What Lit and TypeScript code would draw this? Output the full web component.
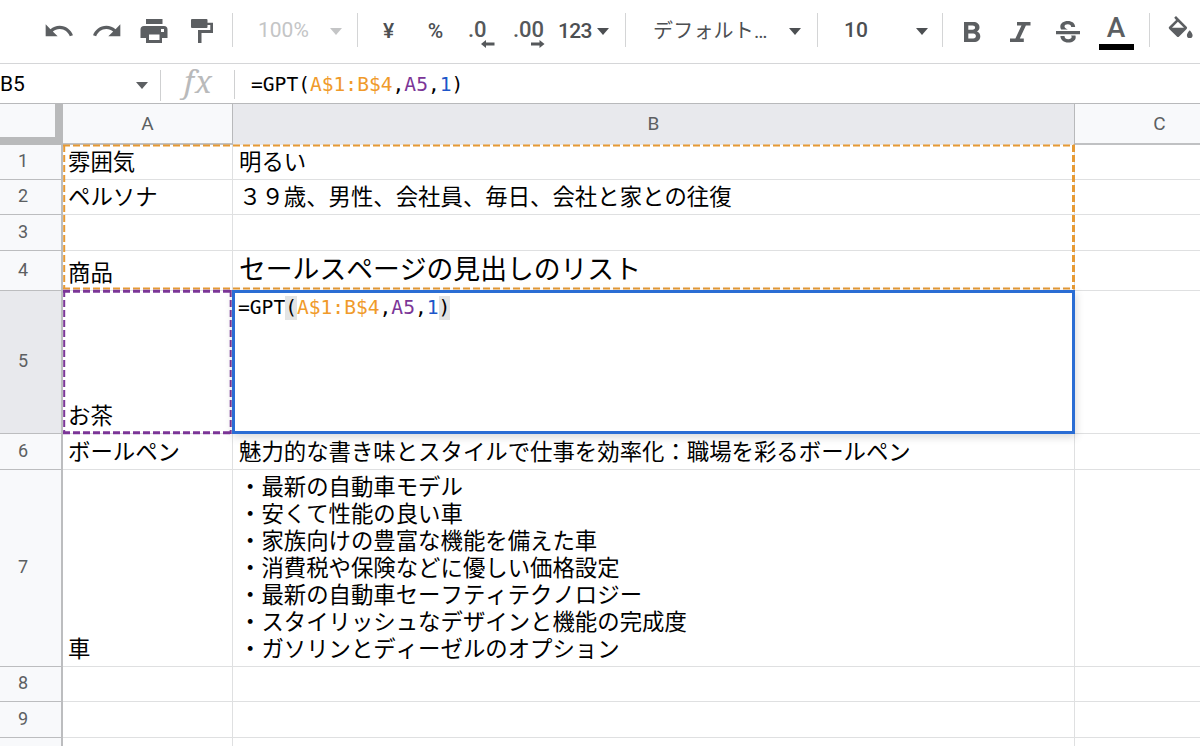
import { LitElement, html, css, svg, nothing } from "lit";
import { customElement } from "lit/decorators.js";
import { classMap } from "lit/directives/class-map.js";

interface Row {
  n?: number;
  h: number;
  a?: string;
  b?: string;
  large?: boolean;
  editing?: boolean;
}

const ROWS: Row[] = [
  { n: 1, h: 35, a: "雰囲気", b: "明るい" },
  { n: 2, h: 35, a: "ペルソナ", b: "３９歳、男性、会社員、毎日、会社と家との往復" },
  { n: 3, h: 36 },
  { n: 4, h: 40, a: "商品", b: "セールスページの見出しのリスト", large: true },
  { n: 5, h: 143, a: "お茶", editing: true },
  { n: 6, h: 36, a: "ボールペン", b: "魅力的な書き味とスタイルで仕事を効率化：職場を彩るボールペン" },
  {
    n: 7,
    h: 197,
    a: "車",
    b: "・最新の自動車モデル\n・安くて性能の良い車\n・家族向けの豊富な機能を備えた車\n・消費税や保険などに優しい価格設定\n・最新の自動車セーフティテクノロジー\n・スタイリッシュなデザインと機能の完成度\n・ガソリンとディーゼルのオプション",
  },
  { n: 8, h: 35 },
  { n: 9, h: 36 },
  { h: 35 },
];

const icon = (w: number, h: number, box: string, body: unknown) =>
  html`<svg width=${w} height=${h} viewBox=${box} fill="currentColor">${body}</svg>`;

const undo = icon(32, 32, "0 0 24 24", svg`<path d="M12.5 8c-2.65 0-5.05.99-6.9 2.6L2 7v9h9l-3.62-3.62c1.39-1.16 3.16-1.88 5.12-1.88 3.54 0 6.55 2.31 7.6 5.5l2.37-.78C21.08 11.03 17.15 8 12.5 8z"/>`);
const redo = icon(32, 32, "0 0 24 24", svg`<path d="M18.4 10.6C16.55 8.99 14.15 8 11.5 8c-4.65 0-8.58 3.03-9.96 7.22L3.9 16c1.05-3.19 4.05-5.5 7.6-5.5 1.95 0 3.73.72 5.12 1.88L13 16h9V7l-3.6 3.6z"/>`);
const printer = icon(28, 24, "0 0 28 24", svg`<path fill-rule="evenodd" d="M6 0h16.500v5H6zM4 7h20a3.500 3.500 0 0 1 3.500 3.500V19H22v5H6v-5H.500v-8.500A3.500 3.500 0 0 1 4 7zM9 15.500v5.500h10.500v-5.500zM21 10v3h3v-3z"/>`);
const paint = icon(24, 24, "0 0 24 24", svg`<path d="M2 0h14.500q1 0 1 1v2.700H23V14H11.500v10H8V11h12.300V6H17.500v2q0 1-1 1H2q-1 0-1-1V1q0-1 1-1z"/>`);
const decLeft = icon(14, 8, "0 0 14 8", svg`<path d="M0 4L5 0v2.600h8.500v2.800H5V8z"/>`);
const decRight = icon(14, 8, "0 0 14 8", svg`<path d="M13.500 4L8.500 0v2.600H0v2.800h8.500V8z"/>`);
const bold = icon(17, 20, "0 0 17 20", svg`<path fill-rule="evenodd" d="M0 0h9.500C13 0 15.500 2 15.500 5.300c0 2-1 3.500-2.500 4.200 2 .700 3.300 2.500 3.300 4.700 0 3.600-2.600 5.800-6.500 5.800H0zM4.300 3.500v4.300h4.200c1.600 0 2.600-.900 2.600-2.200s-1-2.100-2.600-2.100zM4.300 11.500v4.900h4.900c1.700 0 2.700-1 2.700-2.500s-1-2.400-2.700-2.400z"/>`);
const italic = icon(21, 20, "0 0 21 20", svg`<path d="M7 0h13.500v3.400h-4.600L9.800 16.600h4V20H0v-3.400h5.400l6.100-13.200H7z"/>`);
const strike = icon(24, 22, "0 0 24 22", svg`<path d="M0 10h24v3.200H0zM5.200 8.500C4.600 7.700 4.300 6.800 4.300 5.800 4.300 2.200 7.500 0 11.800 0s7.200 2.300 7.400 6h-4c-.100-1.800-1.300-2.800-3.400-2.800-2 0-3.300.900-3.300 2.300 0 1.200 1 2 3.300 3zM4.400 15h4.100c.200 2.200 1.500 3.200 3.800 3.200 2 0 3.300-.800 3.300-2.200 0-.500-.100-1-.500-1.400h4.300c.200.500.300 1 .300 1.600 0 3.200-3 5.300-7.400 5.300-4.600 0-7.700-2.500-7.900-6.500z"/>`);
const bucket = icon(25, 23, "0 0 25 23", svg`<path fill-rule="evenodd" d="M6.200 1.800L8 0l10.600 10.700q1.100 1.100 0 2.200l-7.500 7.500q-1.100 1.100-2.200 0L1.200 12.900q-1.100-1.100 0-2.200L8.100 3.900zM9.900 5.800L4 11.700h12z"/><path d="M21.700 14.200s2.900 3 2.900 5a2.800 2.800 0 0 1-5.700 0c0-2 2.800-5 2.800-5z"/>`);

@customElement("sheet-toolbar")
class SheetToolbar extends LitElement {
  static styles = css`
    :host { display: flex; height: 64px; box-sizing: border-box; border-bottom: 1px solid #d5d6d8; background: #fff; color: #5c5f62; font: 500 20px Roboto, sans-serif; padding-left: 35px; overflow: hidden; }
    .cell { height: 61px; flex: none; display: flex; align-items: center; justify-content: center; width: 48px; }
    .cell svg { display: block; }
    .print { width: 47px; padding-right: 1px; box-sizing: border-box; }
    .sep { width: 1px; height: 34px; margin-top: 13px; background: #d4d5d6; flex: none; }
    .gap { margin-left: 6px; }
    .tri { width: 0; border: 6.500px solid transparent; border-top: 7px solid currentColor; border-bottom: 0; flex: none; margin-top: 2px; }
    .drop { justify-content: space-between; box-sizing: border-box; }
    .zoom { width: 124px; padding: 0 15px 0 25px; color: #c4c5c6; font-weight: 400; font-size: 21px; }
    .zoomtext { position: relative; top: -1px; }
    .sym { width: 47px; font-size: 21px; color: #4c4f52; }
    .first { margin-left: 7px; }
    .dec { flex-direction: column; font-size: 22px; color: #55585b; width: 52px; align-items: flex-start; box-sizing: border-box; }
    .num { line-height: 26px; margin-top: 4px; font-size: 22px; }
    .dec svg { margin-top: -3px; }
    .one { padding-left: 9px; width: 54px; }
    .one svg { margin-left: 13px; }
    .two { padding-left: 0; width: 45px; }
    .two svg { margin-left: 18px; }
    .fmt { width: 67px; gap: 5px; justify-content: flex-start; color: #4c4f52; font-size: 21px; letter-spacing: -.7px; }
    .font { width: 191px; padding: 0 16px 0 27px; font: 400 20px Roboto, "Noto Sans CJK JP", sans-serif; color: #4c4f52; }
    .label.name { letter-spacing: .2px; }
    .size { width: 124px; padding: 0 14px 0 26px; color: #4c4f52; font-size: 21px; }
    .label { position: relative; top: -1px; white-space: nowrap; }
    .tool { width: 47.500px; padding-top: 2px; box-sizing: border-box; }
    .b { margin-left: 6px; }
    .color { flex-direction: column; width: 49px; padding-top: 0; }
    .letter { font-size: 28px; line-height: 29px; margin-top: 2px; }
    .swatch { width: 35px; height: 6.500px; background: #000; margin-top: 2px; }
    .last { margin-left: 8px; }
    .bucket { margin-left: 7px; height: 54px; }
  `;
  render() {
    return html`
      <div class="cell">${undo}</div>
      <div class="cell">${redo}</div>
      <div class="cell print">${printer}</div>
      <div class="cell">${paint}</div>
      <div class="sep gap"></div>
      <div class="cell drop zoom"><span class="zoomtext">100%</span><i class="tri"></i></div>
      <div class="sep"></div>
      <div class="cell sym first">¥</div>
      <div class="cell sym">%</div>
      <div class="cell dec one"><span class="num">.0</span>${decLeft}</div>
      <div class="cell dec two"><span class="num">.00</span>${decRight}</div>
      <div class="cell fmt">123<i class="tri"></i></div>
      <div class="sep"></div>
      <div class="cell drop font"><span class="label name">デフォルト…</span><i class="tri"></i></div>
      <div class="sep"></div>
      <div class="cell drop size"><span class="label">10</span><i class="tri"></i></div>
      <div class="sep"></div>
      <div class="cell tool b">${bold}</div>
      <div class="cell tool">${italic}</div>
      <div class="cell tool">${strike}</div>
      <div class="cell tool color"><span class="letter">A</span><span class="swatch"></span></div>
      <div class="sep last"></div>
      <div class="cell bucket">${bucket}</div>
    `;
  }
}

@customElement("formula-text")
class FormulaText extends LitElement {
  static properties = { marked: { type: Boolean } };
  declare marked: boolean;
  static styles = css`
    :host { display: block; white-space: pre; font: 19.600px/26px "DejaVu Sans Mono", monospace; color: #000; }
    .range { color: #f09a2a; }
    .cell { color: #7b3597; }
    .value { color: #1d56c9; }
    .paren { display: inline-block; line-height: 24px; }
    .hit { background: #e3e4e4; }
  `;
  render() {
    const p = classMap({ paren: true, hit: this.marked });
    return html`=GPT<span class=${p}>(</span><span class="range">A$1:B$4</span>,<span class="cell">A5</span>,<span class="value">1</span><span class=${p}>)</span>`;
  }
}

@customElement("formula-bar")
class FormulaBar extends LitElement {
  static styles = css`
    :host { display: flex; align-items: center; height: 39px; background: #fff; font: 21px Roboto, sans-serif; color: #000; }
    .name { width: 160px; box-sizing: border-box; padding-right: 12px; display: flex; justify-content: space-between; align-items: center; }
    .tri { border: 6.500px solid transparent; border-top: 7px solid #5c5f62; border-bottom: 0; margin-top: 4px; }
    .sep { width: 1px; height: 31px; background: #cfd0d1; margin-top: 4px; }
    .short { height: 29px; margin-top: 1px; }
    .fx { width: 73px; box-sizing: border-box; padding-left: 2px; text-align: center; font: italic 31px/36px "Noto Serif", "Liberation Serif", serif; color: #b9babb; letter-spacing: 1px; margin-top: -5px; }
    .text { margin-left: 16px; margin-top: 2px; }
  `;
  render() {
    return html`
      <div class="name"><span>B5</span><i class="tri"></i></div>
      <div class="sep"></div>
      <div class="fx">fx</div>
      <div class="sep short"></div>
      <formula-text class="text"></formula-text>
    `;
  }
}

@customElement("sheet-grid")
class SheetGrid extends LitElement {
  static styles = css`
    :host { display: block; position: relative; font: 22.400px/27px "Liberation Sans", "Noto Sans CJK JP", sans-serif; font-kerning: none; color: #000; }
    .row { display: grid; grid-template-columns: 63px 170px 842px 1fr; }
    .head { height: 42px; box-sizing: border-box; border-top: 1px solid #b8b9bb; border-bottom: 2px solid #c0c1c3; background: #f8f9fb; font: 19px/39px Roboto, sans-serif; color: #5c5f62; text-align: center; }
    .corner { height: 41px; box-sizing: border-box; border-right: 8px solid #b9babb; border-bottom: 8px solid #b9babb; position: relative; z-index: 1; }
    .col { border-right: 1px solid #b8b9bb; }
    .colc { width: 169px; }
    .active { background: #e8e9ed; }
    .num { box-sizing: border-box; border-right: 2px solid #bcbdbf; border-bottom: 1px solid #bcbdbf; background: #f8f9fb; color: #5c5f62; display: flex; align-items: center; justify-content: center; padding: 0 15px 3px 0; font: 18px Roboto, sans-serif; }
    .num.active { background: #e8e9ed; }
    .cell { min-width: 0; box-sizing: border-box; border-right: 1px solid #dfe0e1; border-bottom: 1px solid #dfe0e1; padding: 0 0 3px 5px; display: flex; align-items: flex-end; white-space: pre; }
    .cell:last-child { border-right: 0; }
    .b { padding-left: 6px; }
    .large { font-size: 26.800px; line-height: 33px; padding-bottom: 3px; }
    .mark { position: absolute; overflow: visible; pointer-events: none; left: 63px; top: 0; }
    .editor { position: absolute; left: 232px; top: 187px; width: 843px; height: 144px; box-sizing: border-box; border: 3px solid #2a6dd4; background: #fff; box-shadow: 1px 3px 8px rgba(60, 64, 67, .2); padding: 2px 0 0 3px; }
  `;
  render() {
    return html`
      <div class="row head">
        <div class="corner"></div>
        <div class="col">A</div>
        <div class="col active">B</div>
        <div class="colc">C</div>
      </div>
      ${ROWS.map(
        (r) => html`<div class="row" style="height:${r.h}px">
          <div class=${classMap({ num: true, active: !!r.editing })}>${r.n ?? nothing}</div>
          <div class="cell">${r.a ?? nothing}</div>
          <div class=${classMap({ cell: true, b: true, large: !!r.large })}>${r.b ?? nothing}</div>
          <div class="cell"></div>
        </div>`
      )}
      <svg class="mark" width="1012" height="332" fill="none">
        <g stroke="#e69a35" stroke-dasharray="7 3">
          <path d="M0 42.500H1012M0 185.500H1012" stroke-width="2"/>
          <path d="M1.200 42V186" stroke-width="2"/>
          <path d="M1010.500 42V186" stroke-width="3"/>
        </g>
        <g stroke="#7b3597" stroke-dasharray="7 3">
          <path d="M0 188.300H170M0 329.800H170" stroke-width="3"/>
          <path d="M1.200 187V331M167.700 187V331" stroke-width="2"/>
        </g>
      </svg>
      <div class="editor"><formula-text marked></formula-text></div>
    `;
  }
}

@customElement("app-root")
class AppRoot extends LitElement {
  static styles = css`
    :host { display: block; width: 100%; height: 746px; overflow: hidden; background: #fff; }
  `;
  render() {
    return html`<sheet-toolbar></sheet-toolbar><formula-bar></formula-bar><sheet-grid></sheet-grid>`;
  }
}
